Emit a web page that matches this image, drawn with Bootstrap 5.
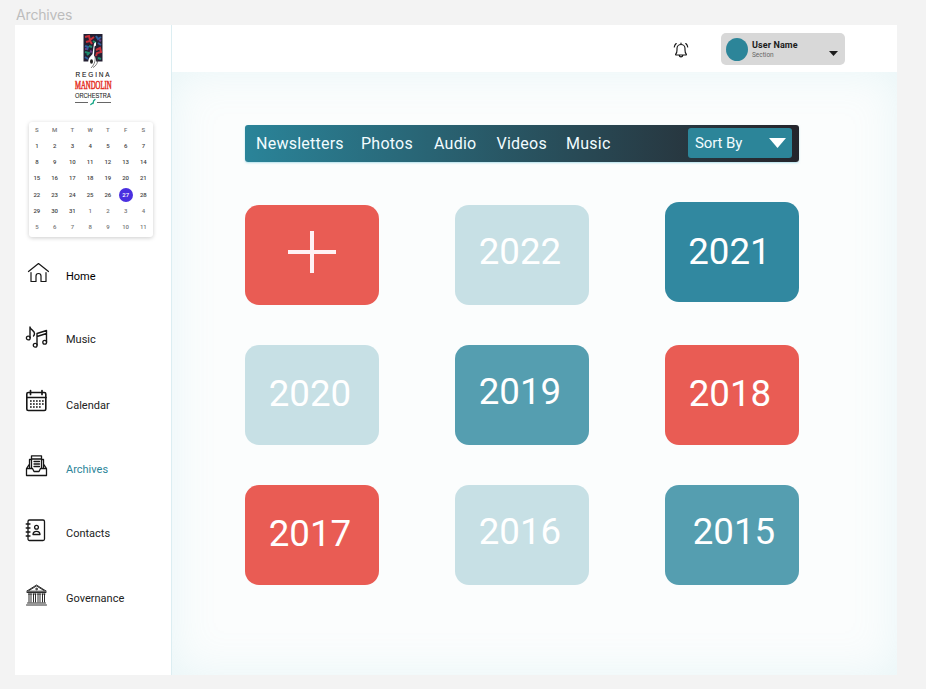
<!DOCTYPE html>
<html lang="en">
<head>
<meta charset="utf-8">
<meta name="viewport" content="width=device-width, initial-scale=1">
<title>Archives</title>
<link href="https://cdn.jsdelivr.net/npm/bootstrap@5.3.0/dist/css/bootstrap.min.css" rel="stylesheet">
<style>
body{background:#f3f3f3;font-family:Roboto,"Liberation Sans",sans-serif;color:#222;overflow:hidden}
.frame-label{font:400 14px/17px Inter,sans-serif;letter-spacing:-.15px;color:#bdbdbd;padding:6px 0 0 16px;height:25px}
.frame{width:882px;height:650px;margin-left:15px}
.side{width:157px;border-right:1px solid #dceef2}
.logo{width:50px;height:76px;margin:7px 0 0 53px}
.month{width:124px;height:115px;margin:14px 0 0 14px;border-radius:3px;box-shadow:0 1px 4px rgba(0,0,0,.2);display:grid;grid-template-columns:repeat(7,17.75px);grid-auto-rows:16.15px;font-size:6px;line-height:16px;text-align:center;font-weight:500;color:#444}
.month div{margin-left:-1px;margin-right:1px}
.month .wd,.month .off{color:#777}
.month .today{width:14px;height:14px;line-height:14px;margin:1px 0 0 .9px;border-radius:50%;background:#4a2fe0;color:#fff}
.side-nav{margin-top:23px}
.side-nav a{height:64.5px;font-size:11px;line-height:14px;color:#222;text-decoration:none;padding-left:10px}
.side-nav a.active{color:#2c8599}
.side-nav svg{width:24px;height:24px;margin-right:17px;flex:none}
.side-nav span{margin-top:9px}
.side-nav a:first-child{color:#000}
.side-nav a:first-child span{margin-top:10px}
.side-nav a:nth-child(2) span{margin-top:8px}
.side-nav a:nth-child(3) span{margin-top:10px}
.ico{fill:none;stroke:#161616;stroke-width:1.3;stroke-linecap:round;stroke-linejoin:round}
.topbar{height:47px;background:#fff;padding-right:52px}
.bell{width:16px;height:17px;margin-right:32px;margin-top:2px}
.user{width:124px;height:32px;border-radius:5px;background:#d8d8d8;padding:0 7px 0 5px;margin-top:1px}
.avatar{width:22px;height:23px;border-radius:50%;background:#2c8599;margin-right:4px}
.user-name{font-size:9px;line-height:11px;font-weight:700;letter-spacing:.1px;color:#1c1c1c;padding-top:2px}
.user-sec{font-size:6.5px;line-height:9px;color:#666}
.stage{background:#fbfdfd;box-shadow:inset 0 0 44px rgba(145,205,220,.17);padding:52.5px 0 0 73px}
.tabs{width:554px;height:37.5px;border-radius:3px;background:linear-gradient(90deg,#2a8499 0%,#272b32 92%,#24252c 100%);box-shadow:0 1px 2px rgba(120,200,220,.55);padding:0 7px 0 11px}
.tabs a{font-size:16px;letter-spacing:.24px;line-height:38px;padding-top:2px;color:#f2fcff;text-decoration:none;white-space:nowrap}
.sort{width:104px;height:30px;border:0;border-radius:3px;background:#2c8599;color:#f2fcff;font-size:15px;letter-spacing:-.1px;padding:0 6px 0 7px;margin-top:-1px}
.years{margin-top:42.5px;width:554px;display:grid;grid-template-columns:repeat(3,134px);grid-auto-rows:100px;gap:40px 76px}
.year{border-radius:14px;color:#fff;font-size:36.7px;line-height:1;padding:0 4px 4px 0;text-decoration:none}
.year.low{padding:0 4px 0 0}
.year.mid{padding-bottom:1px}
.year.plus{padding:0 0 5px}
.year.raised{margin:-2.5px 0 2.5px;padding-right:5px;padding-bottom:0}
.year.east{padding:0 0 4px 4px}
.c-red{background:#e95c54}.c-pale{background:#c7e0e5}.c-deep{background:#3188a0}.c-teal{background:#559eb0}
</style>
</head>
<body>
<div class="frame-label">Archives</div>
<div class="frame d-flex bg-white">
  <aside class="side d-flex flex-column flex-shrink-0">
    <svg class="logo" viewBox="-3 0 50 76">
      <rect x="12.500" y="2" width="19" height="27.500" fill="#242033"/>
      <g fill="none" stroke-width="2">
        <path d="M14 5l4-1 1 4 4-3M15 10l4-1 2 3M25 18l4-2 1 4-4 1-1 3" stroke="#c93039"/>
        <path d="M25 4l2 3 3-2M14 14l3 1-1 3M27 11l3 2M14 25l3 2" stroke="#2f5f9f"/>
        <path d="M22 9l3 2M18 14l3 1M14 20l4 1-2 2M27 26l3 1" stroke="#1d8d6c"/>
        <path d="M28 8l2 1M19 19l2 1M14 17l2 0" stroke="#693b85"/>
      </g>
      <path d="M23 11.500l2-1.500v3.500l-1.500 1-.5 9c3.500 4 2.500 9-1.500 11-4-1-5.500-5-3-9l3-3.500z" fill="#fff"/>
      <ellipse cx="20.500" cy="29.500" rx="1.500" ry="2.300" fill="#222"/>
      <path d="M26 25c2 5-1 9-4 10.500M24 24c1 6-2 10-4 12" fill="none" stroke="#444" stroke-width=".7"/>
      <text transform="translate(4.500 44.800) scale(.86 1)" font-family="Liberation Sans,sans-serif" font-size="7.500" letter-spacing="2.200" stroke="#222" stroke-width=".15" fill="#222">REGINA</text>
      <text transform="translate(4 57) scale(.5 1)" font-family="Liberation Serif,serif" font-size="13.500" stroke="#e5332a" stroke-width=".7" fill="#e5332a">MANDOLIN</text>
      <text transform="translate(4 66) scale(.72 1)" font-family="Liberation Sans,sans-serif" font-size="7.900" stroke="#222" stroke-width=".1" fill="#222">ORCHESTRA</text>
      <path d="M4 70.500H17M26 70.500H40" stroke="#555" stroke-width=".9"/>
      <path d="M22.500 69l1.500-1.500M19.800 72.500l2-1.500M22 71.500l.8-3" stroke="#18a889" stroke-width="1.300" stroke-linecap="round"/>
    </svg>

    <div class="month">
      <div class="wd">S</div><div class="wd">M</div><div class="wd">T</div><div class="wd">W</div><div class="wd">T</div><div class="wd">F</div><div class="wd">S</div>
      <div>1</div><div>2</div><div>3</div><div>4</div><div>5</div><div>6</div><div>7</div>
      <div>8</div><div>9</div><div>10</div><div>11</div><div>12</div><div>13</div><div>14</div>
      <div>15</div><div>16</div><div>17</div><div>18</div><div>19</div><div>20</div><div>21</div>
      <div>22</div><div>23</div><div>24</div><div>25</div><div>26</div><div class="today">27</div><div>28</div>
      <div>29</div><div>30</div><div>31</div><div class="off">1</div><div class="off">2</div><div class="off">3</div><div class="off">4</div>
      <div class="off">5</div><div class="off">6</div><div class="off">7</div><div class="off">8</div><div class="off">9</div><div class="off">10</div><div class="off">11</div>
    </div>

    <nav class="side-nav d-flex flex-column">
      <a href="#" class="d-flex align-items-start">
        <svg class="ico" viewBox="0 0 24 24"><path d="M3.500 11.500L13.500 3.500l10 8M6 12.500V21.500h5v-5.500a2.500 2.500 0 0 1 5 0v5.500h5V12.500" stroke-width="1.200"/></svg><span>Home</span></a>
      <a href="#" class="d-flex align-items-start">
        <svg class="ico" viewBox="0 0 24 24"><path d="M5 12.500V2c.5 3 4.500 3.500 4.500 6.500 0 1-.5 2-1 2.500M12 20V8.500l9.500-3V17M12 11.500l9.500-3" stroke-width="1.400"/><circle cx="3.300" cy="13" r="1.900"/><circle cx="10.200" cy="20.300" r="1.900"/><circle cx="19.700" cy="17.300" r="1.900"/></svg><span>Music</span></a>
      <a href="#" class="d-flex align-items-start">
        <svg class="ico" viewBox="0 0 24 24"><rect x="1.800" y="3.500" width="19" height="18" rx="1.500" stroke-width="1.600"/><path d="M2 8.500h19M5.500 1.500v4M17 1.500v4" stroke-width="1.700"/><path d="M5 12h14M5 15h14M5 18h11" stroke-width="1.700" stroke-dasharray="1.700 1.300" stroke-linecap="butt"/></svg><span>Calendar</span></a>
      <a href="#" class="active d-flex align-items-start">
        <svg class="ico" viewBox="0 0 24 24"><path d="M1.500 14.500h6l1.500 3h5l1.500-3h6v7h-20zM1.500 14.500l3-4.500M21.500 14.500L18.500 10M4.500 14V5.500h1.500M18.500 14V5.500H17M6.500 5V1.800h10V5M6.500 5h10v9.500M6.500 5v9.500M9 7.500h5.500M9 10h5.500M9 12.500h5.500" stroke-width="1.300"/></svg><span>Archives</span></a>
      <a href="#" class="d-flex align-items-start">
        <svg class="ico" viewBox="0 0 24 24"><rect x="3" y="2" width="16.500" height="20.500" rx="1.500"/><path d="M1.200 6h3.800M1.200 10h3.800M1.200 14h3.800M1.200 18h3.800M8 16.500c0-4.300 7-4.300 7 0z"/><circle cx="11.500" cy="9.200" r="1.900"/></svg><span>Contacts</span></a>
      <a href="#" class="d-flex align-items-start">
        <svg class="ico" viewBox="0 0 24 24"><g stroke-width=".9"><path d="M2 8L11.500 2l9.500 6zM2 9.500h19M4 7.500l7.500-4.500L19 7.500M2.500 20h18M1.500 22h20M3.500 11h3M8 11h3M12.500 11h3M17 11h3M4 11v8M6 11v8M8.500 11v8M10.500 11v8M13 11v8M15 11v8M17.500 11v8M19.500 11v8"/><circle cx="11.500" cy="6" r=".8"/></g></svg><span>Governance</span></a>
    </nav>
  </aside>

  <div class="d-flex flex-column flex-grow-1">
    <header class="topbar d-flex align-items-center justify-content-end">
      <svg class="bell ico" viewBox="0 0 16 17"><path d="M2.800 13c1-1 1.200-2 1.200-4V7.500a4 4 0 0 1 8 0V9c0 2 .200 3 1.200 4 .5.700.2 1-.5 1H3.300c-.700 0-1-.300-.5-1zM8 3.300V2M6.200 14.300c.3 2 3.300 2 3.600 0M3.200 2.500C2.300 3.300 1.500 4.200 1.300 6M12.800 2.500c.9.800 1.700 1.700 1.900 3.500" stroke-width="1.150"/></svg>
      <div class="user d-flex align-items-center">
        <div class="avatar"></div>
        <div><div class="user-name">User Name</div><div class="user-sec">Section</div></div>
        <svg class="ms-auto mt-2" width="9" height="5" viewBox="0 0 9 5"><path d="M0 0h9L4.500 5z" fill="#1c1c1c"/></svg>
      </div>
    </header>
    <main class="stage flex-grow-1">
      <nav class="tabs d-flex align-items-center">
        <a href="#" style="width:105px">Newsletters</a>
        <a href="#" style="width:73px">Photos</a>
        <a href="#" style="width:62.500px">Audio</a>
        <a href="#" style="width:69.500px">Videos</a>
        <a href="#">Music</a>
        <button class="sort d-flex align-items-center justify-content-between ms-auto" type="button"><span>Sort By</span><svg width="17" height="10" viewBox="0 0 17 10"><path d="M0 0h17L8.500 10z" fill="#fff"/></svg></button>
      </nav>
      <div class="years">
        <a href="#" class="year plus c-red d-flex align-items-center justify-content-center"><svg width="50" height="42" viewBox="0 0 50 42"><path d="M25 0v42M1 21h48" stroke="#fff2f4" stroke-width="4"/></svg></a>
        <a href="#" class="year c-pale d-flex align-items-center justify-content-center">2022</a>
        <a href="#" class="year raised c-deep d-flex align-items-center justify-content-center">2021</a>
        <a href="#" class="year low c-pale d-flex align-items-center justify-content-center">2020</a>
        <a href="#" class="year c-teal d-flex align-items-center justify-content-center">2019</a>
        <a href="#" class="year mid c-red d-flex align-items-center justify-content-center">2018</a>
        <a href="#" class="year low c-red d-flex align-items-center justify-content-center">2017</a>
        <a href="#" class="year c-pale d-flex align-items-center justify-content-center">2016</a>
        <a href="#" class="year east c-teal d-flex align-items-center justify-content-center">2015</a>
      </div>
    </main>
  </div>
</div>
<script src="https://cdn.jsdelivr.net/npm/bootstrap@5.3.0/dist/js/bootstrap.bundle.min.js"></script>
</body>
</html>
